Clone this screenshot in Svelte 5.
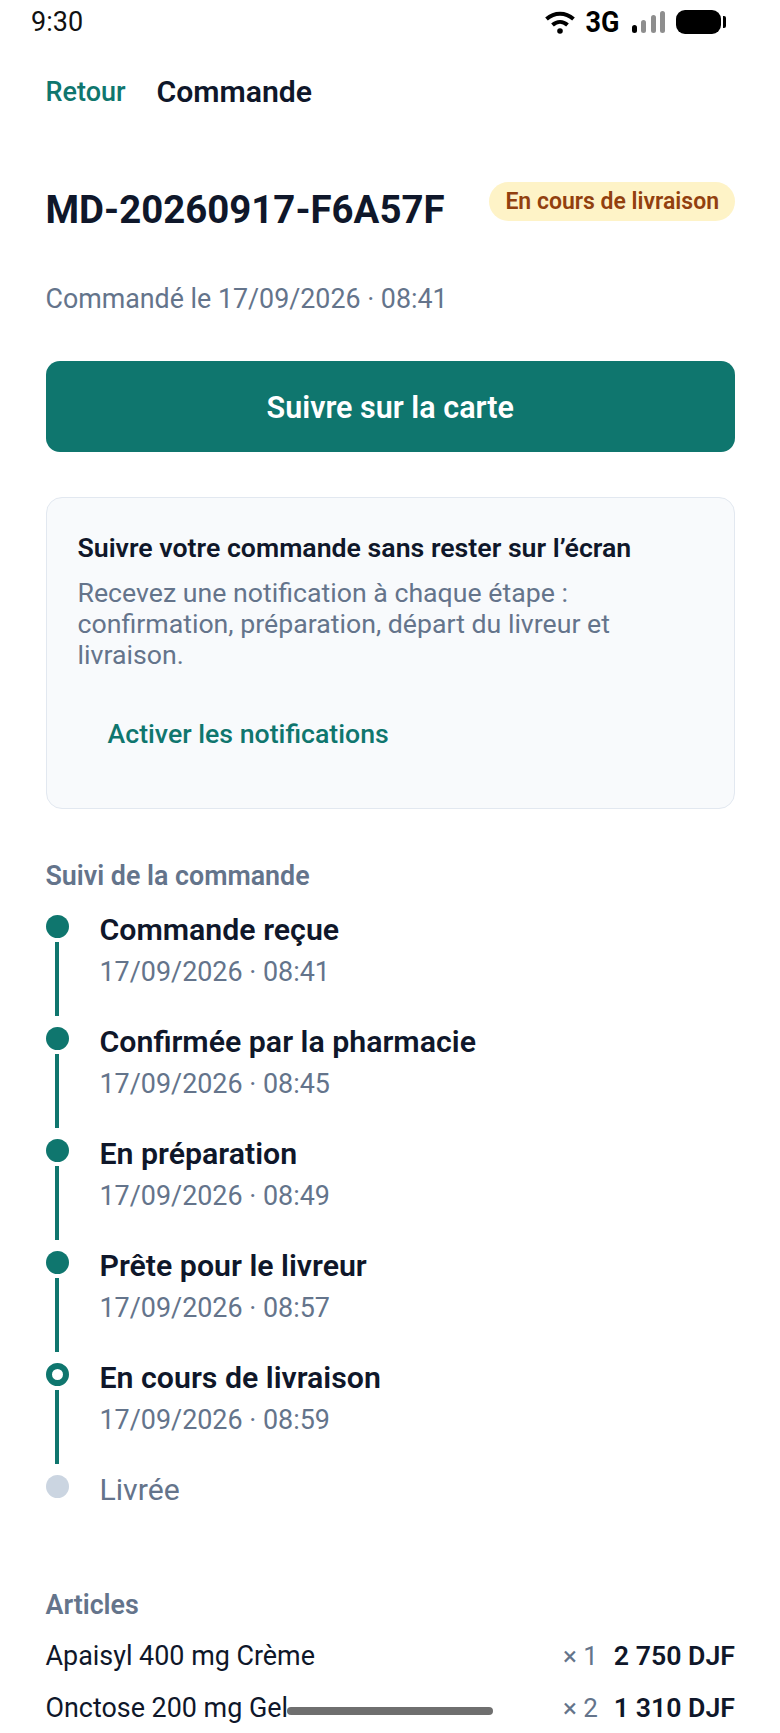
<script>
  const steps = [
    { title: 'Commande reçue', time: '17/09/2026 · 08:41', state: 'done' },
    { title: 'Confirmée par la pharmacie', time: '17/09/2026 · 08:45', state: 'done' },
    { title: 'En préparation', time: '17/09/2026 · 08:49', state: 'done' },
    { title: 'Prête pour le livreur', time: '17/09/2026 · 08:57', state: 'done' },
    { title: 'En cours de livraison', time: '17/09/2026 · 08:59', state: 'current' }
  ];
  const items = [
    { name: 'Apaisyl 400 mg Crème', qty: '× 1', price: '2 750 DJF' },
    { name: 'Onctose 200 mg Gel', qty: '× 2', price: '1 310 DJF' }
  ];
</script>

<div class="page">
  <div class="status">
    <span class="clock">9:30</span>
    <div class="sys">
      <svg class="wifi" width="30" height="23" viewBox="0 0 30 23" fill="none" stroke="#000" stroke-width="4">
        <path d="M1.5 8C9.5 1 20.5 1 28.5 8" />
        <path d="M7.5 14C12 10 18 10 22.5 14" />
        <circle cx="15" cy="20" r="2.8" fill="#000" stroke="none" />
      </svg>
      <span class="net">3G</span>
      <div class="bars">
        <i class="bar b1"></i><i class="bar b2"></i><i class="bar b3"></i><i class="bar b4"></i>
      </div>
      <div class="battery"><div class="cell"></div><div class="nub"></div></div>
    </div>
  </div>

  <div class="nav">
    <span class="back">Retour</span>
    <span class="navtitle">Commande</span>
  </div>

  <div class="head">
    <h1>MD-20260917-F6A57F</h1>
    <span class="badge">En cours de livraison</span>
  </div>

  <p class="ordered">Commandé le 17/09/2026 · 08:41</p>

  <button class="cta">Suivre sur la carte</button>

  <div class="card">
    <div class="cardtitle">Suivre votre commande sans rester sur l’écran</div>
    <p class="cardtext">Recevez une notification à chaque étape : confirmation, préparation, départ du livreur et livraison.</p>
    <div class="link">Activer les notifications</div>
  </div>

  <div class="label track">Suivi de la commande</div>
  <div class="timeline">
    {#each steps as s}
      <div class="step">
        <div class="rail">
          <span class="dot {s.state}"></span>
          <span class="line"></span>
        </div>
        <div class="stepbody">
          <div class="steptitle">{s.title}</div>
          <div class="steptime">{s.time}</div>
        </div>
      </div>
    {/each}
    <div class="step last">
      <div class="rail"><span class="dot pending"></span></div>
      <div class="stepbody"><div class="pendingtitle">Livrée</div></div>
    </div>
  </div>

  <div class="label articles">Articles</div>
  <div class="items">
    {#each items as it}
      <div class="item">
        <span class="name">{it.name}</span>
        <span class="qty">{it.qty}</span>
        <span class="price">{it.price}</span>
      </div>
    {/each}
  </div>

  <div class="home"></div>
</div>

<style>
  :global(body) { margin: 0; background: #fff; }
  .page {
    position: relative;
    width: 780px;
    height: 1733px;
    overflow: hidden;
    background: #fff;
    font-family: Roboto, "Liberation Sans", sans-serif;
    color: #0f172a;
    box-sizing: border-box;
    padding: 0 45px 0 45.5px;
  }
  .status {
    display: flex;
    justify-content: space-between;
    align-items: center;
    height: 44px;
    margin: 0 9px 0 -14.5px;
  }
  .clock { font-size: 27px; color: #111; }
  .sys { display: flex; align-items: center; }
  .wifi { margin-right: 11px; }
  .net { font-size: 27px; font-weight: 700; color: #000; margin-right: 12px; transform: scaleY(1.08); }
  .bars { display: flex; align-items: flex-end; gap: 4.5px; height: 22px; margin-right: 11px; }
  .bar { display: block; width: 5px; border-radius: 3px; background: #8e8e8e; }
  .b1 { height: 8px; background: #000; }
  .b2 { height: 13px; }
  .b3 { height: 18px; }
  .b4 { height: 22px; }
  .battery { display: flex; align-items: center; }
  .cell { width: 45px; height: 24px; border-radius: 9px; background: #000; }
  .nub { width: 3px; height: 12px; margin-left: 2px; border-radius: 0 2px 2px 0; background: #000; }

  .nav { display: flex; align-items: center; gap: 31px; height: 40px; margin-top: 28px; }
  .back { font-size: 27px; color: #0f766e; font-weight: 500; }
  .navtitle { font-size: 30.2px; font-weight: 600; margin-top: -1px; }

  .head { display: flex; justify-content: space-between; align-items: flex-start; margin-top: 70px; }
  h1 { margin: 5.5px 0 0; font-size: 38.4px; line-height: 44px; font-weight: 700; }
  .badge {
    background: #fef3c7;
    color: #92400e;
    font-size: 23px;
    font-weight: 600;
    line-height: 39px;
    padding: 0 16px;
    border-radius: 20px;
  }
  .ordered { margin: 49.5px 0 0; font-size: 26.8px; line-height: 36px; color: #64748b; }

  .cta {
    display: block;
    width: 100%;
    height: 91px;
    margin-top: 44px;
    padding: 2px 0 0;
    border: 0;
    border-radius: 14px;
    background: #0f766e;
    color: #fff;
    font: 600 30.5px Roboto, sans-serif;
  }

  .card {
    box-sizing: border-box;
    height: 312px;
    margin-top: 45px;
    padding: 33px 31px 0;
    background: #f8fafc;
    border: 1px solid #e2e8f0;
    border-radius: 16px;
  }
  .cardtitle { font-size: 26.7px; line-height: 34px; font-weight: 600; }
  .cardtext { margin: 13px 0 0; font-size: 26.7px; line-height: 31px; color: #64748b; }
  .link { margin: 46px 0 0 30px; font-size: 26.7px; line-height: 34px; color: #0f766e; font-weight: 500; }

  .label { font-size: 26.8px; line-height: 34px; font-weight: 600; color: #64748b; }
  .track { margin-top: 50px; }

  .timeline { margin-top: 14px; }
  .step { display: flex; gap: 31px; height: 112px; }
  .rail { display: flex; flex-direction: column; align-items: center; width: 23px; flex: none; padding-top: 8px; box-sizing: border-box; }
  .dot { display: block; box-sizing: border-box; width: 23px; height: 23px; border-radius: 50%; flex: none; }
  .dot.done { background: #0f766e; }
  .dot.current { background: #fff; border: 6px solid #0f766e; }
  .dot.pending { background: #cbd5e1; }
  .line { display: block; width: 4px; height: 74px; margin-top: 4px; background: #0f766e; }
  .steptitle { font-size: 30.3px; line-height: 38px; font-weight: 600; margin-top: 3.5px; }
  .steptime { font-size: 26.9px; line-height: 36px; margin-top: 5.5px; color: #64748b; }
  .pendingtitle { font-size: 30.2px; line-height: 38px; color: #64748b; margin-top: 3.5px; }
  .step.last { height: 58px; }

  .articles { margin-top: 63px; }
  .items { margin-top: 8px; }
  .item { display: flex; align-items: center; height: 52px; font-size: 26.9px; }
  .name { flex: 1; }
  .qty { color: #64748b; margin-right: 16px; font-size: 26px; }
  .price { font-weight: 600; font-size: 26.7px; }

  .home {
    position: absolute;
    left: 287px;
    top: 1707px;
    width: 206px;
    height: 8px;
    border-radius: 4px;
    background: #6f6f6f;
  }
</style>
